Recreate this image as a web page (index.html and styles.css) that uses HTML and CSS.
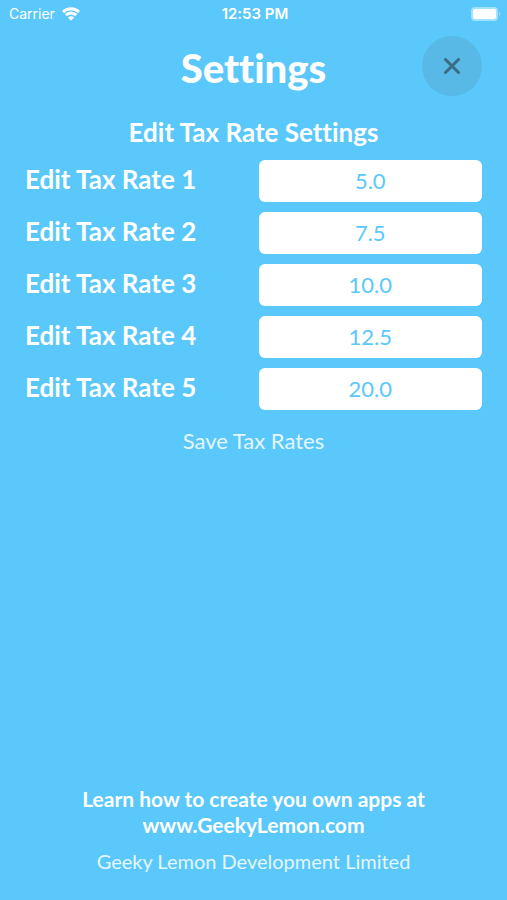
FILE: index.html
```html
<!DOCTYPE html>
<html lang="en">
<head>
    <meta charset="UTF-8">
    <meta name="viewport" content="width=device-width, initial-scale=1.0">
    <title>Settings</title>
    <link rel="stylesheet" href="styles.css">
</head>
<body>
    <div class="status-bar">
        <div class="carrier">
            <span>Carrier</span>
            <svg class="wifi" viewBox="0 0 18 14" width="18" height="14">
                <path d="M1 5 C5.4 0.7 12.6 0.7 17 5" />
                <path d="M3.8 8.2 C6.8 5.3 11.2 5.3 14.2 8.2" />
                <path class="wifi-dot" d="M5.9 10.6 C7.7 8.9 10.3 8.9 12.1 10.6 L9 13.8 Z" />
            </svg>
        </div>
        <span class="time">12:53 PM</span>
        <svg class="battery" viewBox="0 0 31 14" width="31" height="14">
            <rect class="battery-shell" x="1" y="0" width="27" height="14" rx="4" />
            <rect class="battery-fill" x="3" y="2" width="23" height="10" rx="2" />
            <path class="battery-tip" d="M29 5 Q31.5 7 29 9 Z" />
        </svg>
    </div>

    <header class="header">
        <h1>Settings</h1>
        <button type="button" class="close-button" aria-label="Close">
            <svg viewBox="0 0 16 16" width="16" height="16">
                <path d="M1.5 1.5 L14.5 14.5 M14.5 1.5 L1.5 14.5" />
            </svg>
        </button>
    </header>

    <main class="settings">
        <h2>Edit Tax Rate Settings</h2>
        <form class="tax-form">
            <div class="form-group">
                <label for="rate1">Edit Tax Rate 1</label>
                <input type="text" id="rate1" name="rate1" value="5.0" inputmode="decimal">
            </div>
            <div class="form-group">
                <label for="rate2">Edit Tax Rate 2</label>
                <input type="text" id="rate2" name="rate2" value="7.5" inputmode="decimal">
            </div>
            <div class="form-group">
                <label for="rate3">Edit Tax Rate 3</label>
                <input type="text" id="rate3" name="rate3" value="10.0" inputmode="decimal">
            </div>
            <div class="form-group">
                <label for="rate4">Edit Tax Rate 4</label>
                <input type="text" id="rate4" name="rate4" value="12.5" inputmode="decimal">
            </div>
            <div class="form-group">
                <label for="rate5">Edit Tax Rate 5</label>
                <input type="text" id="rate5" name="rate5" value="20.0" inputmode="decimal">
            </div>
            <button type="submit" class="save-button">Save Tax Rates</button>
        </form>
    </main>

    <footer class="footer">
        <a href="#" class="learn-link">Learn how to create you own apps at<br>www.GeekyLemon.com</a>
        <p>Geeky Lemon Development Limited</p>
    </footer>
</body>
</html>
```
FILE: styles.css
```css
* {
    box-sizing: border-box;
}

body {
    display: flex;
    flex-direction: column;
    min-height: 100vh;
    margin: 0;
    font-family: "Avenir Next", Lato, sans-serif;
    font-variant-ligatures: none;
    background-color: #5ac8fa;
    color: #fff;
}

.status-bar {
    display: grid;
    grid-template-columns: 1fr auto 1fr;
    align-items: center;
    height: 27px;
    padding: 0 6px 0 9px;
    font-family: Inter, sans-serif;
    font-size: 14px;
}

.carrier {
    display: flex;
    align-items: center;
    gap: 7px;
}

.time {
    font-size: 15px;
    font-weight: 600;
}

.wifi {
    fill: none;
    stroke: #fff;
    stroke-width: 3;
}

.wifi .wifi-dot {
    fill: #fff;
    stroke: none;
}

.battery {
    justify-self: end;
    fill: #fff;
}

.battery-shell,
.battery-tip {
    opacity: 0.45;
}

.header {
    display: grid;
    grid-template-columns: 1fr auto 1fr;
    align-items: center;
    height: 77px;
    padding: 0 25px;
}

.header h1 {
    grid-column: 2;
    margin: 0;
    padding-top: 4px;
    font-size: 40px;
    font-weight: 900;
}

.close-button {
    display: flex;
    align-items: center;
    justify-content: center;
    justify-self: end;
    width: 60px;
    height: 60px;
    padding: 0;
    border: none;
    border-radius: 50%;
    background-color: #58b9e6;
    cursor: pointer;
}

.close-button svg {
    fill: none;
    stroke: #3c6c83;
    stroke-width: 3;
    stroke-linecap: round;
}

.settings {
    padding: 13px 25px;
}

.settings h2 {
    margin: 0 0 13px;
    font-size: 26px;
    line-height: 30px;
    font-weight: bold;
    text-align: center;
}

.tax-form {
    display: flex;
    flex-direction: column;
    gap: 10px;
}

.form-group {
    display: grid;
    grid-template-columns: 1fr 1fr;
    align-items: center;
    column-gap: 10px;
}

.form-group label {
    padding-bottom: 4px;
    font-size: 26px;
    line-height: 30px;
    font-weight: bold;
}

.form-group input {
    width: 100%;
    height: 42px;
    padding: 0 0 2px;
    border: none;
    border-radius: 6px;
    background-color: #fff;
    color: #5ac8fa;
    font-family: inherit;
    font-size: 22px;
    text-align: center;
}

.save-button {
    align-self: center;
    margin-top: 6px;
    padding: 0;
    border: none;
    background: none;
    color: #e4f6fe;
    font-family: inherit;
    font-size: 22px;
    line-height: 30px;
    cursor: pointer;
}

.footer {
    margin-top: auto;
    padding-bottom: 26px;
    text-align: center;
}

.learn-link {
    color: #fff;
    font-size: 21px;
    font-weight: bold;
    line-height: 26px;
    text-decoration: none;
}

.footer p {
    margin: 10px 0 0;
    color: #e4f6fe;
    font-size: 20px;
    line-height: 26px;
}
```
